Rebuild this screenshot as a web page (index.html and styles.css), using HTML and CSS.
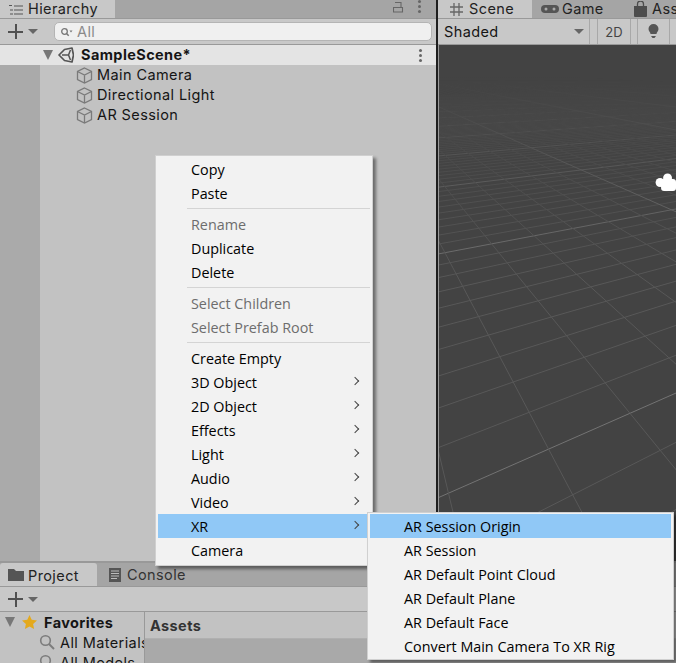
FILE: index.html
```html
<!DOCTYPE html>
<html lang="en">
<head>
  <meta charset="UTF-8">
  <title>Unity Editor - Create XR menu</title>
  <link rel="stylesheet" href="styles.css">
</head>
<body>
  <div class="editor">
    <div class="top">
      <section class="hierarchy">
        <div class="tabs">
          <div class="tab active">
            <svg class="tab-icon" width="14" height="12" viewBox="0 0 14 12"><path d="M0 1.500h3M5 2h9M1 6h3M5 6h9M1 10h3M5 10h9" stroke="#555" stroke-width="1.200" fill="none"/></svg>
            <span>Hierarchy</span>
          </div>
          <div class="tab-tools">
            <svg width="11" height="13" viewBox="0 0 11 13"><path d="M.5 7.500h9v4.500h-9zM2 2.500h6v5" stroke="#666" stroke-width="1.100" fill="none"/></svg>
            <span class="dots"></span>
          </div>
        </div>
        <div class="toolbar">
          <span class="plus"></span>
          <span class="caret"></span>
          <div class="search">
            <svg width="13" height="10" viewBox="0 0 13 10"><circle cx="4.500" cy="4.500" r="2.800" stroke="#777" stroke-width="1.300" fill="none"/><path d="M6.500 6.500l2.200 2.200" stroke="#777" stroke-width="1.500"/><path d="M9.500 3.500h3l-1.500 2z" fill="#777"/></svg>
            <span>All</span>
          </div>
        </div>
        <div class="scene-row">
          <span class="fold"></span>
          <svg class="unity" width="16" height="16" viewBox="0 0 16 16"><path d="M1 8L6.500 2.500 14 1l1.500 7L14 15l-7.500-1.500z" fill="none" stroke="#555" stroke-width="1.700" stroke-linejoin="round"/><path d="M4 8h6.500L12.500 3M10.500 8l2 5" fill="none" stroke="#555" stroke-width="1.500"/></svg>
          <strong>SampleScene*</strong>
          <span class="dots row-dots"></span>
        </div>
        <div class="tree">
          <div class="gutter"></div>
          <ul class="objects">
            <li><svg class="cube" width="17" height="17" viewBox="0 0 17 17"><path d="M8.500 1l7 3.500v8l-7 3.500-7-3.500v-8zM1.500 4.500L8.500 8l7-3.500M8.500 8v8" fill="none" stroke="#7a7a7a" stroke-width="1.300"/></svg><span>Main Camera</span></li>
            <li><svg class="cube" width="17" height="17" viewBox="0 0 17 17"><path d="M8.500 1l7 3.500v8l-7 3.500-7-3.500v-8zM1.500 4.500L8.500 8l7-3.500M8.500 8v8" fill="none" stroke="#7a7a7a" stroke-width="1.300"/></svg><span>Directional Light</span></li>
            <li><svg class="cube" width="17" height="17" viewBox="0 0 17 17"><path d="M8.500 1l7 3.500v8l-7 3.500-7-3.500v-8zM1.500 4.500L8.500 8l7-3.500M8.500 8v8" fill="none" stroke="#7a7a7a" stroke-width="1.300"/></svg><span>AR Session</span></li>
          </ul>
        </div>
      </section>

      <section class="scene-view">
        <div class="tabs">
          <div class="tab active scene-tab">
            <svg class="tab-icon" width="13" height="13" viewBox="0 0 13 13"><path d="M4 0v13M9 0v13M0 4h13M0 9h13" stroke="#666" stroke-width="1.300" fill="none"/></svg>
            <span>Scene</span>
          </div>
          <div class="tab game-tab">
            <svg width="18" height="10" viewBox="0 0 18 10"><rect y="1" width="18" height="8" rx="4" fill="#555"/><circle cx="5" cy="5" r="1.500" fill="#aaa"/><circle cx="13" cy="5" r="1.500" fill="#aaa"/></svg>
            <span>Game</span>
          </div>
          <div class="tab store-tab">
            <svg width="13" height="16" viewBox="0 0 13 16"><path d="M0 5h13v10a1 1 0 0 1-1 1H1a1 1 0 0 1-1-1z" fill="#4c4c4c"/><path d="M3.500 6V3a3 3 0 0 1 6 0v3" stroke="#4c4c4c" stroke-width="1.300" fill="none"/></svg>
            <span>Asset Store</span>
          </div>
        </div>
        <div class="scene-toolbar">
          <div class="shaded"><span>Shaded</span><span class="caret"></span></div>
          <div class="tool-btn mode">2D</div>
          <div class="tool-btn bulb">
            <svg width="11" height="15" viewBox="0 0 11 15"><path d="M5.500 0a5 5 0 0 1 5 5c0 2.500-2 3-2 5h-6c0-2-2-2.500-2-5a5 5 0 0 1 5-5z" fill="#555"/><path d="M3 12h5L6.500 14h-2z" fill="#555"/></svg>
          </div>
        </div>
        <svg class="viewport" viewBox="0 0 238 516" preserveAspectRatio="none">
          <defs>
            <linearGradient id="fade" gradientUnits="userSpaceOnUse" x1="0" y1="32" x2="0" y2="240">
              <stop offset="0" stop-color="#000"/>
              <stop offset="1" stop-color="#fff"/>
            </linearGradient>
            <mask id="floor" maskUnits="userSpaceOnUse" x="0" y="0" width="238" height="516">
              <rect width="238" height="516" fill="url(#fade)"/>
            </mask>
          </defs>
          <rect width="238" height="516" fill="#434343"/>
          <g id="grid" mask="url(#floor)" fill="none"></g>
          <g fill="#fff">
            <circle cx="229.500" cy="133" r="4.500"/>
            <circle cx="222" cy="137.500" r="4.500"/>
            <rect x="223" y="134" width="15" height="12" rx="3"/>
          </g>
        </svg>
      </section>
    </div>

    <section class="project">
      <div class="tabs">
        <div class="tab active project-tab">
          <svg class="tab-icon" width="16" height="12" viewBox="0 0 16 12"><path d="M0 0h6l2 2h8v10H0z" fill="#555"/></svg>
          <span>Project</span>
        </div>
        <div class="tab console-tab">
          <svg width="12" height="14" viewBox="0 0 12 14"><rect width="12" height="14" fill="#555"/><path d="M2 3h8M2 5.500h8M2 8h8M2 10.500h6" stroke="#bbb"/></svg>
          <span>Console</span>
        </div>
      </div>
      <div class="toolbar project-bar">
        <span class="plus"></span>
        <span class="caret"></span>
      </div>
      <div class="browser">
        <div class="favorites">
          <div class="fav-head">
            <span class="fold"></span>
            <svg width="15" height="14" viewBox="0 0 15 14"><path d="M7.500 0l2.200 4.800 5.300.6-3.900 3.500 1 5.100-4.600-2.600L2.900 14l1-5.100L0 5.400l5.300-.6z" fill="#e4a91c"/></svg>
            <strong>Favorites</strong>
          </div>
          <div class="fav-item"><svg width="16" height="16" viewBox="0 0 16 16"><circle cx="6.500" cy="6.500" r="4.800" stroke="#7c7c7c" stroke-width="1.600" fill="none"/><path d="M10 10l5 5" stroke="#7c7c7c" stroke-width="2"/></svg><span>All Materials</span></div>
          <div class="fav-item"><svg width="16" height="16" viewBox="0 0 16 16"><circle cx="6.500" cy="6.500" r="4.800" stroke="#7c7c7c" stroke-width="1.600" fill="none"/><path d="M10 10l5 5" stroke="#7c7c7c" stroke-width="2"/></svg><span>All Models</span></div>
        </div>
        <div class="assets"><div class="assets-head">Assets</div></div>
      </div>
    </section>
  </div>

  <div class="menu main-menu">
    <div class="item">Copy</div>
    <div class="item">Paste</div>
    <div class="sep"></div>
    <div class="item off">Rename</div>
    <div class="item">Duplicate</div>
    <div class="item">Delete</div>
    <div class="sep"></div>
    <div class="item off">Select Children</div>
    <div class="item off">Select Prefab Root</div>
    <div class="sep"></div>
    <div class="item">Create Empty</div>
    <div class="item sub">3D Object</div>
    <div class="item sub">2D Object</div>
    <div class="item sub">Effects</div>
    <div class="item sub">Light</div>
    <div class="item sub">Audio</div>
    <div class="item sub">Video</div>
    <div class="item sub hot">XR</div>
    <div class="item">Camera</div>
  </div>

  <div class="menu xr-menu">
    <div class="item hot">AR Session Origin</div>
    <div class="item">AR Session</div>
    <div class="item">AR Default Point Cloud</div>
    <div class="item">AR Default Plane</div>
    <div class="item">AR Default Face</div>
    <div class="item">Convert Main Camera To XR Rig</div>
  </div>

  <script>
    // floor grid: two fans of lines, each running to its own vanishing point
    const grid = document.getElementById('grid');

    function addLine(x1, y1, x2, y2, major) {
      const line = document.createElementNS('http://www.w3.org/2000/svg', 'line');
      line.setAttribute('x1', x1);
      line.setAttribute('y1', y1);
      line.setAttribute('x2', x2);
      line.setAttribute('y2', y2);
      line.setAttribute('stroke', major ? '#737373' : '#585858');
      grid.appendChild(line);
    }

    // lines going up to the right
    for (let k = -7; k < 120; k++) {
      const y0 = 25 + 1 / (0.00234 + 0.00031 * k);
      addLine(0, y0, 238, 25 + (y0 - 25) * (975 - 238) / 975, k % 10 === 0);
    }

    // lines going down to the right
    for (let n = -7; n < 60; n++) {
      const c = 2.27 + 0.29 * n;
      addLine(-93, 21, -93 + c * 500, 521, n % 10 === 0);
    }
  </script>
</body>
</html>
```

FILE: styles.css
```css
html, body {
  margin: 0;
  height: 663px;
  overflow: hidden;
}

body {
  position: relative;
  width: 676px;
  font-family: Inter, "Noto Sans", sans-serif;
  font-size: 14.5px;
  letter-spacing: 0.4px;
  color: #151515;
  background: #a5a5a5;
}

svg {
  display: block;
  flex: none;
}

.editor {
  display: flex;
  flex-direction: column;
  height: 663px;
}

.top {
  display: flex;
  height: 563px;
  box-sizing: border-box;
  border-bottom: 2px solid #999;
}

.hierarchy {
  display: flex;
  flex-direction: column;
  width: 436px;
  background: #c2c2c2;
}

.scene-view {
  display: flex;
  flex-direction: column;
  flex: 1;
  min-width: 0;
  border-left: 2px solid #1e1e1e;
}

/* tabs */
.tabs {
  display: flex;
  align-items: stretch;
  height: 19px;
  box-sizing: border-box;
  overflow: hidden;
  background: #a5a5a5;
  border-bottom: 1px solid #999;
}

.tab {
  display: flex;
  flex: none;
  align-items: center;
  box-sizing: border-box;
  white-space: nowrap;
  color: #222;
}

.top .tab span {
  margin-bottom: 2px;
}

.tab.active {
  background: #c8c8c8;
  height: 19px;
}

.hierarchy .tab {
  width: 115px;
  padding-left: 9px;
  gap: 5px;
}

.tab-tools {
  display: flex;
  align-items: flex-start;
  gap: 14px;
  margin-left: auto;
  padding-right: 15px;
}

.dots {
  display: block;
  width: 3px;
  height: 3px;
  margin-top: 5px;
  border-radius: 50%;
  background: #666;
  box-shadow: 0 -5px 0 #666, 0 5px 0 #666;
}

.scene-tab {
  width: 94px;
  padding-left: 12px;
  gap: 6px;
}

.game-tab {
  width: 102px;
  padding-left: 9px;
  gap: 3px;
}

.store-tab {
  gap: 5px;
}

/* toolbars */
.toolbar {
  display: flex;
  align-items: center;
  height: 26px;
  box-sizing: border-box;
  padding-left: 8px;
  background: #c8c8c8;
  border-bottom: 1px solid #999;
}

.plus {
  display: block;
  width: 15px;
  height: 15px;
  background: linear-gradient(#505050, #505050) center / 100% 2px no-repeat,
              linear-gradient(#505050, #505050) center / 2px 100% no-repeat;
}

.caret {
  display: block;
  width: 0;
  height: 0;
  margin-left: 5px;
  border-left: 5px solid transparent;
  border-right: 5px solid transparent;
  border-top: 5px solid #666;
}

.search {
  display: flex;
  align-items: center;
  gap: 4px;
  width: 378px;
  height: 19px;
  margin-left: 16px;
  padding-left: 5px;
  box-sizing: border-box;
  background: #f0f0f0;
  border: 1px solid #b4b4b4;
  border-radius: 5px;
  color: #8a8a8a;
}

.scene-row {
  display: flex;
  align-items: center;
  height: 20px;
  padding-left: 43px;
  background: #e4e4e4;
}

.scene-row strong {
  margin-bottom: 2px;
}

.fold {
  display: block;
  width: 0;
  height: 0;
  border-left: 5px solid transparent;
  border-right: 5px solid transparent;
  border-top: 10px solid #777;
}

.unity {
  margin-left: 5px;
  margin-right: 7px;
}

.row-dots {
  margin: 0 14px 0 auto;
}

.tree {
  display: flex;
  flex: 1;
}

.gutter {
  width: 40px;
  background: #aaa;
}

.objects {
  list-style: none;
  margin: 0;
  padding: 0 0 0 36px;
}

.objects li {
  display: flex;
  align-items: center;
  gap: 4px;
  height: 20px;
  white-space: nowrap;
}

.objects span {
  margin-bottom: 2px;
}

/* scene view */
.scene-toolbar {
  display: flex;
  flex: none;
  height: 26px;
  box-sizing: border-box;
  background: #c8c8c8;
  border-bottom: 1px solid #999;
}

.shaded {
  display: flex;
  align-items: center;
  justify-content: space-between;
  width: 152px;
  padding: 0 5px 0 6px;
  box-sizing: border-box;
  border-right: 1px solid #a8a8a8;
}

.tool-btn {
  display: flex;
  align-items: center;
  justify-content: center;
  box-sizing: border-box;
  height: 100%;
  border-left: 1px solid #a8a8a8;
  border-right: 1px solid #a8a8a8;
}

.mode {
  width: 34px;
  margin-left: 7px;
  color: #444;
  font-size: 13px;
  letter-spacing: 0;
}

.bulb {
  width: 33px;
  margin-left: 6px;
}

.viewport {
  flex: 1;
  width: 100%;
  min-height: 0;
  box-sizing: border-box;
  border-left: 1px solid #9a9a9a;
}

/* project panel */
.project {
  flex: 1;
  display: flex;
  flex-direction: column;
  min-height: 0;
  background: #c2c2c2;
}

.project .tabs {
  flex: none;
  height: 24px;
}

.project .tab.active {
  height: 24px;
}

.project-tab {
  width: 97px;
  padding-left: 8px;
  gap: 4px;
  border-radius: 3px 3px 0 0;
}

.console-tab {
  padding-left: 12px;
  gap: 6px;
  color: #333;
}

.project-bar {
  flex: none;
  height: 25px;
}

.browser {
  display: flex;
  flex: 1;
  min-height: 0;
}

.favorites {
  width: 145px;
  flex: none;
  box-sizing: border-box;
  overflow: hidden;
  border-right: 1px solid #999;
}

.fav-head {
  display: flex;
  align-items: center;
  height: 20px;
  padding-left: 5px;
  gap: 7px;
}

.fav-item {
  display: flex;
  align-items: center;
  gap: 5px;
  height: 20px;
  padding-left: 39px;
  white-space: nowrap;
}

.assets {
  flex: 1;
  background: #a9a9a9;
}

.assets-head {
  height: 26px;
  line-height: 27px;
  padding-left: 5px;
  background: #c2c2c2;
  border-bottom: 1px solid #b0b0b0;
  font-weight: 700;
  color: #333;
}

/* context menus */
.menu {
  position: absolute;
  box-sizing: border-box;
  padding: 1px 2px;
  background: #f2f2f2;
  border: 1px solid #d0d0d0;
  box-shadow: 3px 3px 3px rgba(0, 0, 0, 0.45);
  font-family: "Open Sans", sans-serif;
  font-size: 14.35px;
  letter-spacing: 0;
  color: #000;
}

.main-menu {
  left: 155px;
  top: 155px;
  width: 218px;
  height: 411px;
}

.xr-menu {
  left: 367px;
  top: 512px;
  width: 307px;
}

.item {
  position: relative;
  height: 24px;
  line-height: 26px;
  padding-left: 33px;
  white-space: nowrap;
}

.xr-menu .item {
  padding-left: 34px;
}

.item.off {
  color: #6d6d6d;
}

.item.hot {
  background: #90c8f6;
}

.sub::after {
  content: "";
  position: absolute;
  right: 12px;
  top: 8px;
  width: 5px;
  height: 5px;
  border-top: 1px solid #444;
  border-right: 1px solid #444;
  transform: rotate(45deg);
}

.sep {
  height: 1px;
  margin: 3px 0 3px 29px;
  background: #d4d4d4;
}
```
